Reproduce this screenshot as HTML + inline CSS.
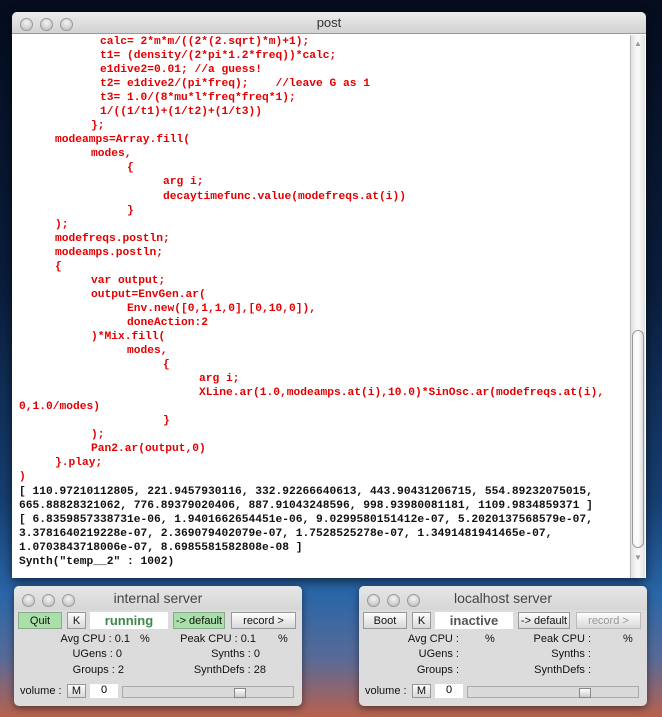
<!DOCTYPE html>
<html><head><meta charset="utf-8"><style>
*{margin:0;padding:0;box-sizing:border-box}
html,body{width:662px;height:717px;overflow:hidden}
body{position:relative;font-family:"Liberation Sans",sans-serif;
background:linear-gradient(180deg,#050d1e 0%,#0a1d3c 40%,#163f72 70%,#2a66a8 83%,#5a6a96 92%,#b9614c 100%);}
.win{position:absolute;background:#fff;border-radius:5px 5px 0 0;box-shadow:0 3px 10px rgba(0,0,0,.6);overflow:hidden}
.tb{position:absolute;left:0;right:0;top:0;height:22px;background:linear-gradient(#ececec,#d2d2d2);border-radius:5px 5px 0 0;border-bottom:1px solid #999;text-align:center;font-size:13px;line-height:22px;color:#333}
.lights{position:absolute;left:8px;top:4px}
.lights i{display:inline-block;width:13px;height:13px;border-radius:50%;margin-right:7px;background:radial-gradient(circle at 50% 35%,#f4f4f4,#b8b8b8);border:1px solid #9a9a9a}
.code{position:absolute;left:0;top:23px;font-family:"Liberation Mono",monospace;font-weight:bold;font-size:11.25px;line-height:14.05px;color:#e40000}
.code div{height:14.05px;white-space:pre}
.k{color:#111}
.l0{padding-left:7px}.l1{padding-left:43px}.l2{padding-left:79px}.l3{padding-left:115px}.l4{padding-left:151px}.l5{padding-left:187px}.lc{padding-left:88px}
.sb{position:absolute;left:618px;top:23px;width:15px;height:543px;background:linear-gradient(90deg,#e2e2e2,#fafafa,#e2e2e2);border-left:1px solid #bbb}
.thumb{position:absolute;left:620px;top:318px;width:12px;height:218px;border:1px solid #999;border-radius:6px;background:linear-gradient(90deg,#f6f6f6,#fff,#ddd)}
.srv{position:absolute;top:586px;width:288px;height:120px;background:#dcdcdc;border-radius:5px;box-shadow:0 2px 8px rgba(0,0,0,.5)}
.srv .tb{background:linear-gradient(#e6e6e6,#d6d6d6);border-bottom:none;font-size:14px;color:#444;height:24px;line-height:24px}
.b{position:absolute;top:26px;height:17px;font-size:11px;line-height:16px;text-align:center;background:linear-gradient(#fdfdfd,#d8d8d8);border:1px solid #999;color:#111}
.g{background:#a9e0a9;border-color:#8a8}
.st{position:absolute;top:26px;height:17px;background:#fff;font-weight:bold;font-size:13px;line-height:17px;text-align:center}
.t{position:absolute;font-size:11px;color:#111}
.sl{position:absolute;top:100px;height:12px;border:1px solid #aaa;background:#d9d9d9}
.kn{position:absolute;top:1px;width:12px;height:10px;background:linear-gradient(#fff,#ccc);border:1px solid #888}
</style></head><body>
<div class="win" style="left:12px;top:12px;width:634px;height:566px">
<div class="tb"><div class="lights"><i></i><i></i><i></i></div>post</div>
<div class="sb"></div><div class="thumb"></div>
<div style="position:absolute;left:622px;top:27px;font-size:8px;color:#999">▲</div>
<div style="position:absolute;left:622px;top:541px;font-size:8px;color:#999">▼</div>
<div class="code"><div class="lc">calc= 2*m*m/((2*(2.sqrt)*m)+1);</div><div class="lc">t1= (density/(2*pi*1.2*freq))*calc;</div><div class="lc">e1dive2=0.01; //a guess!</div><div class="lc">t2= e1dive2/(pi*freq);    //leave G as 1</div><div class="lc">t3= 1.0/(8*mu*l*freq*freq*1);</div><div class="lc">1/((1/t1)+(1/t2)+(1/t3))</div><div class="l2">};</div><div class="l1">modeamps=Array.fill(</div><div class="l2">modes,</div><div class="l3">{</div><div class="l4">arg i;</div><div class="l4">decaytimefunc.value(modefreqs.at(i))</div><div class="l3">}</div><div class="l1">);</div><div class="l1">modefreqs.postln;</div><div class="l1">modeamps.postln;</div><div class="l1">{</div><div class="l2">var output;</div><div class="l2">output=EnvGen.ar(</div><div class="l3">Env.new([0,1,1,0],[0,10,0]),</div><div class="l3">doneAction:2</div><div class="l2">)*Mix.fill(</div><div class="l3">modes,</div><div class="l4">{</div><div class="l5">arg i;</div><div class="l5">XLine.ar(1.0,modeamps.at(i),10.0)*SinOsc.ar(modefreqs.at(i),</div><div class="l0">0,1.0/modes)</div><div class="l4">}</div><div class="l2">);</div><div class="l2">Pan2.ar(output,0)</div><div class="l1">}.play;</div><div class="l0">)</div><div class="l0 k">[ 110.97210112805, 221.9457930116, 332.92266640613, 443.90431206715, 554.89232075015,</div><div class="l0 k">665.88828321062, 776.89379020406, 887.91043248596, 998.93980081181, 1109.9834859371 ]</div><div class="l0 k">[ 6.8359857338731e-06, 1.9401662654451e-06, 9.0299580151412e-07, 5.2020137568579e-07,</div><div class="l0 k">3.3781640219228e-07, 2.369079402079e-07, 1.7528525278e-07, 1.3491481941465e-07,</div><div class="l0 k">1.0703843718006e-07, 8.6985581582808e-08 ]</div><div class="l0 k">Synth("temp__2" : 1002)</div></div>
</div>

<div class="srv" style="left:14px">
<div class="tb"><div class="lights"><i></i><i></i><i></i></div>internal server</div>
<div class="b g" style="left:4px;width:44px">Quit</div>
<div class="b" style="left:53px;width:19px">K</div>
<div class="st" style="left:76px;width:78px;color:#3a8a4a">running</div>
<div class="b g" style="left:159px;width:52px">-&gt; default</div>
<div class="b" style="left:217px;width:65px">record &gt;</div>
<div class="t" style="left:36px;top:47px;width:80px;text-align:right">Avg CPU : 0.1</div>
<div class="t" style="left:126px;top:47px">%</div>
<div class="t" style="left:160px;top:47px;width:82px;text-align:right">Peak CPU : 0.1</div>
<div class="t" style="left:264px;top:47px">%</div>
<div class="t" style="left:40px;top:62px;width:68px;text-align:right">UGens : 0</div>
<div class="t" style="left:170px;top:62px;width:76px;text-align:right">Synths : 0</div>
<div class="t" style="left:40px;top:78px;width:70px;text-align:right">Groups : 2</div>
<div class="t" style="left:160px;top:78px;width:92px;text-align:right">SynthDefs : 28</div>
<div class="t" style="left:6px;top:99px">volume :</div>
<div class="b" style="left:53px;top:98px;width:19px;height:14px;line-height:13px">M</div>
<div class="st" style="left:76px;top:98px;width:28px;height:14px;font-weight:normal;font-size:11px;line-height:13px">0</div>
<div class="sl" style="left:108px;width:172px"><div class="kn" style="left:111px"></div></div>
</div>

<div class="srv" style="left:359px">
<div class="tb"><div class="lights"><i></i><i></i><i></i></div>localhost server</div>
<div class="b" style="left:4px;width:44px">Boot</div>
<div class="b" style="left:53px;width:19px">K</div>
<div class="st" style="left:76px;width:78px;color:#555">inactive</div>
<div class="b" style="left:159px;width:52px">-&gt; default</div>
<div class="b" style="left:217px;width:65px;color:#999;border-color:#bbb">record &gt;</div>
<div class="t" style="left:20px;top:47px;width:80px;text-align:right">Avg CPU :</div>
<div class="t" style="left:126px;top:47px">%</div>
<div class="t" style="left:150px;top:47px;width:82px;text-align:right">Peak CPU :</div>
<div class="t" style="left:264px;top:47px">%</div>
<div class="t" style="left:30px;top:62px;width:70px;text-align:right">UGens :</div>
<div class="t" style="left:160px;top:62px;width:72px;text-align:right">Synths :</div>
<div class="t" style="left:30px;top:78px;width:70px;text-align:right">Groups :</div>
<div class="t" style="left:150px;top:78px;width:82px;text-align:right">SynthDefs :</div>
<div class="t" style="left:6px;top:99px">volume :</div>
<div class="b" style="left:53px;top:98px;width:19px;height:14px;line-height:13px">M</div>
<div class="st" style="left:76px;top:98px;width:28px;height:14px;font-weight:normal;font-size:11px;line-height:13px">0</div>
<div class="sl" style="left:108px;width:172px"><div class="kn" style="left:111px"></div></div>
</div>
</body></html>
